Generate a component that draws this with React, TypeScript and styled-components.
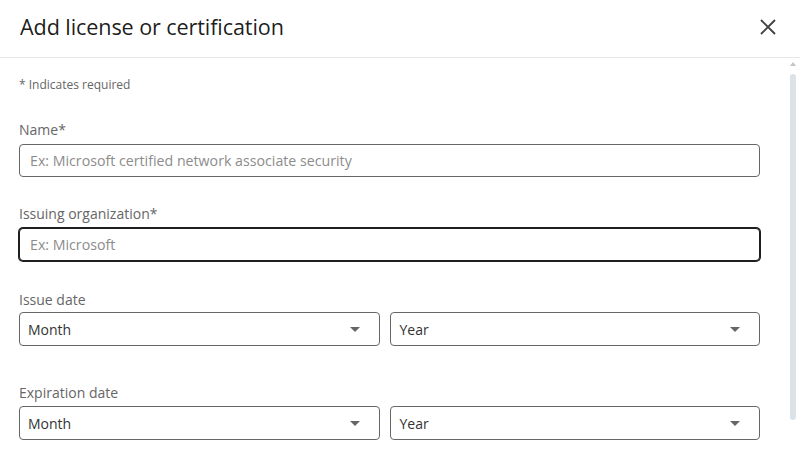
import React from "react";
import styled, { createGlobalStyle } from "styled-components";

const GlobalStyle = createGlobalStyle`
	html, body {
		margin: 0;
		padding: 0;
		background: #fff;
	}
	body {
		font-family: "Open Sans", "Noto Sans", Arial, sans-serif;
		color: rgba(0, 0, 0, 0.9);
	}
	* {
		box-sizing: border-box;
	}
`;

export default function App() {
	return (
		<>
			<GlobalStyle />
			<StyledModal>
				<Header>
					<Title>Add license or certification</Title>
					<CloseButton aria-label='Dismiss'>
						<svg width='18' height='18' viewBox='0 0 18 18'>
							<path d='M2 2 L16 16 M16 2 L2 16' stroke='#404040' strokeWidth='1.9' />
						</svg>
					</CloseButton>
				</Header>
				<Body>
					<Form>
						<Required>* Indicates required</Required>
						<Field $top={27}>
							<Label>Name*</Label>
							<TextInput placeholder='Ex: Microsoft certified network associate security' />
						</Field>
						<Field $top={27}>
							<Label>Issuing organization*</Label>
							<TextInput $focused placeholder='Ex: Microsoft' />
						</Field>
						<Field $top={29} $gap={2}>
							<Label>Issue date</Label>
							<SelectRow>
								<Select value='Month' />
								<Select value='Year' />
							</SelectRow>
						</Field>
						<Field $top={37} $gap={3}>
							<Label>Expiration date</Label>
							<SelectRow>
								<Select value='Month' />
								<Select value='Year' />
							</SelectRow>
						</Field>
					</Form>
					<ScrollTrack>
						<ScrollArrow />
						<ScrollThumb />
					</ScrollTrack>
				</Body>
			</StyledModal>
		</>
	);
}

function Select({ value }: { value: string }) {
	return (
		<SelectBox>
			<span>{value}</span>
			<Caret />
		</SelectBox>
	);
}

const StyledModal = styled.div`
	width: 800px;
	height: 463px;
	display: flex;
	flex-direction: column;
	overflow: hidden;
	background: #fff;
`;

const Header = styled.div`
	height: 58px;
	flex-shrink: 0;
	display: flex;
	align-items: center;
	justify-content: space-between;
	padding: 0 23px 4px 20px;
	border-bottom: 1px solid #e8e8e8;
`;

const Title = styled.h2`
	margin: 0;
	font-size: 21.6px;
	font-weight: 400;
	letter-spacing: -0.1px;
	color: rgba(0, 0, 0, 0.9);
`;

const CloseButton = styled.button`
	border: none;
	background: none;
	padding: 0;
	width: 18px;
	height: 18px;
	display: flex;
	cursor: pointer;
`;

const Body = styled.div`
	flex: 1;
	display: flex;
	min-height: 0;
`;

const Form = styled.div`
	flex: 1;
	padding: 19px 0 0 19px;
	margin-right: 27px;
	display: flex;
	flex-direction: column;
`;

const Required = styled.div`
	font-size: 12px;
	line-height: 16px;
	color: #666;
`;

const Field = styled.div<{ $top: number; $gap?: number }>`
	margin-top: ${(p) => p.$top}px;
	display: flex;
	flex-direction: column;
	gap: ${(p) => p.$gap ?? 4}px;
`;

const Label = styled.label`
	font-size: 14px;
	line-height: 20px;
	color: #666;
`;

const TextInput = styled.input<{ $focused?: boolean }>`
	height: 33px;
	width: 100%;
	padding: 0 10px;
	font-family: inherit;
	font-size: 14.2px;
	color: #333;
	border-radius: 4px;
	border: 1px solid ${(p) => (p.$focused ? "#1f1f1f" : "#666")};
	box-shadow: ${(p) => (p.$focused ? "0 0 0 1px #1f1f1f" : "none")};
	outline: none;

	&::placeholder {
		color: #8c8c8c;
	}
`;

const SelectRow = styled.div`
	display: grid;
	grid-template-columns: 361fr 369fr;
	gap: 10px;
`;

const SelectBox = styled.div`
	height: 34px;
	border: 1px solid #666;
	border-radius: 4px;
	display: flex;
	align-items: center;
	justify-content: space-between;
	padding: 0 19px 0 8px;
	font-size: 14px;
	color: #333;
`;

const Caret = styled.span`
	width: 0;
	height: 0;
	border-left: 5.5px solid transparent;
	border-right: 5.5px solid transparent;
	border-top: 5.5px solid #666;
`;

const ScrollTrack = styled.div`
	width: 12px;
	margin-right: 1px;
	display: flex;
	flex-direction: column;
	align-items: center;
	padding-top: 4px;
`;

const ScrollArrow = styled.span`
	width: 0;
	height: 0;
	border-left: 3px solid transparent;
	border-right: 3px solid transparent;
	border-bottom: 4px solid #c4c4c4;
`;

const ScrollThumb = styled.div`
	margin-top: 8px;
	width: 6px;
	height: 346px;
	border-radius: 3px;
	background: #dbe2e8;
`;
